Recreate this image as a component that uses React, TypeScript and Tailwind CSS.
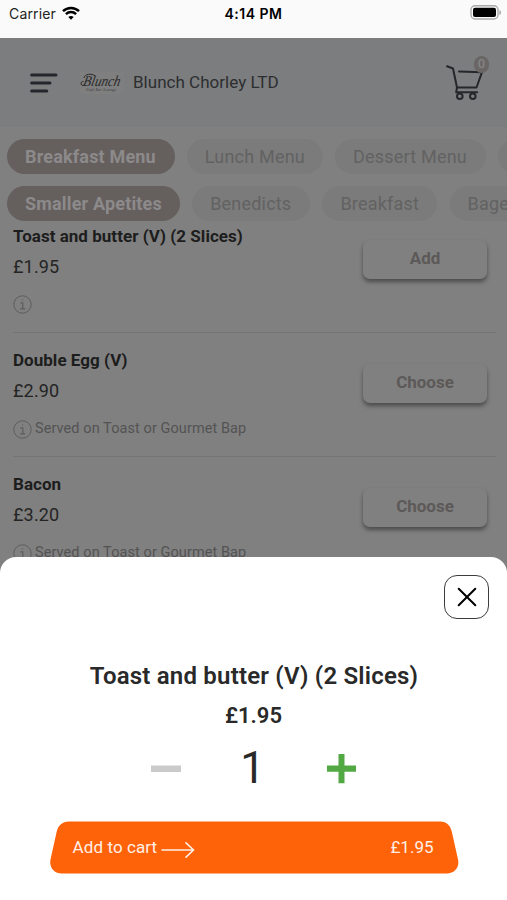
import clsx from 'clsx';
import React from 'react';

interface MenuItem {
  name: string;
  price: string;
  action: string;
  note?: string;
}

interface Tab {
  label: string;
  width: string;
  active?: boolean;
}

const menus: Tab[] = [
  { label: 'Breakfast Menu', width: 'w-[167.5px]', active: true },
  { label: 'Lunch Menu', width: 'w-[136px]' },
  { label: 'Dessert Menu', width: 'w-[151px]' },
  { label: 'Drinks', width: 'w-[110px]' },
];

const categories: Tab[] = [
  { label: 'Smaller Apetites', width: 'w-[173px]', active: true },
  { label: 'Benedicts', width: 'w-[118px]' },
  { label: 'Breakfast', width: 'w-[115px]' },
  { label: 'Bagels', width: 'w-[96px]' },
];

const items: MenuItem[] = [
  { name: 'Toast and butter (V) (2 Slices)', price: '£1.95', action: 'Add' },
  { name: 'Double Egg (V)', price: '£2.90', action: 'Choose', note: 'Served on Toast or Gourmet Bap' },
  { name: 'Bacon', price: '£3.20', action: 'Choose', note: 'Served on Toast or Gourmet Bap' },
];

const StatusBar = () => (
  <div className="grid h-[38px] shrink-0 grid-cols-3 items-start bg-[#fafafa] pt-[5px] text-black">
    <div className="flex items-center pl-[9px]">
      <span className="font-[Inter] text-[14px] leading-[18px] tracking-[0.15px] text-[#222]">Carrier</span>
      <svg className="-mt-[2px] ml-[6px]" width="18" height="14" viewBox="0 0 18 14" fill="none" stroke="currentColor" strokeWidth="2.5">
        <path d="M1 5.1C5.5.8 12.5.8 17 5.1" />
        <path d="M3.9 8.1c2.9-2.7 7.3-2.7 10.2 0" />
        <path d="M6.3 10.9c1.6-1.3 3.8-1.3 5.4 0L9 13.7z" fill="currentColor" stroke="none" />
      </svg>
    </div>
    <span className="text-center font-[Inter] text-[14px] leading-[18px] font-semibold tracking-[0.5px]">4:14 PM</span>
    <svg className="mr-[5px] justify-self-end" width="32" height="15" viewBox="0 0 32 15">
      <rect x="1" y=".8" width="27" height="13.2" rx="4" fill="#fafafa" stroke="#aaa" strokeWidth="1.4" />
      <rect x="3" y="2.8" width="23" height="9.2" rx="2" fill="#000" />
      <path d="M29.3 5v5c2.4-.8 2.4-4.2 0-5z" fill="#aaa" />
    </svg>
  </div>
);

const Header = () => (
  <header className="flex h-[89px] shrink-0 items-center bg-[#7b7d7f] pr-[18px] pl-[30px]">
    <svg width="28" height="22" viewBox="0 0 28 22" stroke="#25262b" strokeWidth="3.2" strokeLinecap="round">
      <path d="M1.7 3h24.2M1.7 11h18.2M1.7 19h15" />
    </svg>
    <div className="ml-[22px] flex h-[22px] w-[44px] items-center justify-center bg-[#7f7f80]">
      <svg width="44" height="22" viewBox="0 0 44 22" fill="#292929" fontFamily="Liberation Serif, serif" fontStyle="italic">
        <text x="4" y="13.5" fontSize="15" textLength="37" lengthAdjust="spacingAndGlyphs" transform="skewX(-12) translate(1.500 0)">Blunch</text>
        <path d="M5 13C0 15 0 9 3.500 9.500M4 6C4 2 12 1 15 4" fill="none" stroke="#292929" strokeWidth="1" />
        <text x="6" y="18.500" fontSize="4" textLength="30" fillOpacity=".8">Café Bar Lounge</text>
      </svg>
    </div>
    <h1 className="-mt-[2px] ml-[9px] text-[17px] leading-5 tracking-[0.02px] text-[#2d2e2f]">Blunch Chorley LTD</h1>
    <div className="relative ml-auto h-[44px] w-[44px]">
      <svg width="44" height="44" viewBox="0 0 44 44" fill="none" stroke="#26272a" strokeWidth="2" strokeLinecap="round" strokeLinejoin="round">
        <path d="M2 5.200l6 2.300 4 19h19.500l5.500-15.300L14 10.500" />
        <path d="M12 26.500l-.8 4.800h21" />
        <circle cx="14.800" cy="35.200" r="2.800" />
        <circle cx="27.800" cy="35.200" r="2.800" />
      </svg>
      <span className="absolute -top-[5px] left-[29px] flex h-[17px] w-[15px] items-center justify-center rounded-full bg-[#696665] text-[13px] font-medium text-[#858383]">
        0
      </span>
    </div>
  </header>
);

const TabRow = ({ tabs, className }: { tabs: Tab[]; className: string }) => (
  <div className={clsx('flex pl-[7px]', className)}>
    {tabs.map((tab) => (
      <button
        key={tab.label}
        className={clsx(
          'h-[35px] shrink-0 rounded-full pb-px pl-[18px] text-left text-[18px] whitespace-nowrap',
          tab.width,
          tab.active ? 'bg-[#655f5e] font-bold tracking-[0.17px] text-[#8c8a8a]' : 'bg-[#7b7b7b] tracking-[0.2px] text-[#626262]'
        )}
      >
        {tab.label}
      </button>
    ))}
  </div>
);

const InfoIcon = () => (
  <svg width="19" height="19" viewBox="0 0 19 19" fill="none" stroke="#5d5d5d" strokeWidth="1">
    <circle cx="9.5" cy="9.5" r="8.7" />
    <path d="M7.3 7.8h2.5v6M7 13.8h5.2M9.1 4.8h1" strokeWidth="1.2" />
  </svg>
);

const ItemRow = ({ item }: { item: MenuItem }) => (
  <li className="flex h-[124px] shrink-0 justify-between border-b border-[#757575]">
    <div className="flex flex-col">
      <h2 className="mt-[17px] text-[17px] leading-5 font-bold tracking-[0.03px] text-[#1d1d1d]">{item.name}</h2>
      <p className="mt-[11px] text-[18px] leading-5 tracking-[0.15px] text-[#242424]">{item.price}</p>
      <div className="mt-[18px] flex items-center gap-[3px]">
        <InfoIcon />
        <span className="text-[14.5px] leading-5 tracking-[0.08px] text-[#535353]">{item.note}</span>
      </div>
    </div>
    <button className="mt-[31px] mr-[9px] h-[39px] w-[124px] rounded-[7px] bg-[#808080] pb-[2px] text-[17px] font-bold text-[#5c5958] shadow-[0_3px_4px_#4c4c4c]">
      {item.action}
    </button>
  </li>
);

const CartSheet = () => (
  <section className="absolute inset-x-0 bottom-0 flex h-[343px] flex-col items-center rounded-t-[16px] bg-white text-[#292929]">
    <button className="mt-[18px] mr-[18px] flex h-[44px] w-[45px] shrink-0 items-center justify-center self-end rounded-[13px] border border-[#3c3c3c]">
      <svg width="20" height="20" viewBox="0 0 20 20" stroke="#000" strokeWidth="2" strokeLinecap="round">
        <path d="M1.7 1.7l16.6 16.6M18.3 1.7L1.7 18.3" />
      </svg>
    </button>
    <h2 className="mt-[41px] ml-px text-[24px] leading-8 font-semibold tracking-[0.2px] whitespace-nowrap">Toast and butter (V) (2 Slices)</h2>
    <p className="mt-[10px] text-[22px] leading-7 font-semibold">£1.95</p>
    <div className="mt-[13px] flex h-[52px] w-[206px] items-center justify-between">
      <svg width="30" height="30" viewBox="0 0 30 30" fill="#cacaca">
        <path d="M0 11.500h30v6.500H0z" />
      </svg>
      <span className="-mt-[2px] mr-[2px] text-[44px] leading-[52px]">1</span>
      <svg width="30" height="30" viewBox="0 0 30 30" fill="#52a944">
        <path d="M12.500 0h6v11.500H30.500v6.200h-12v11.600h-6V17.700H1V11.500h11.500z" />
      </svg>
    </div>
    <button className="relative mt-[26px] ml-[2px] h-[53px] w-[410px] text-[17px] text-[#fff0e6]">
      <svg className="absolute inset-0" width="410" height="53" viewBox="0 0 410 53" fill="#ff6309">
        <path d="M19 .5h371c7 0 10.5 4 12 11l6 27c1.8 8-3.5 14-11 14H12c-8 0-13-6-11.5-14l6-27C8 4.500 12 .5 19 .5z" />
      </svg>
      <span className="relative flex h-full items-center justify-between pr-[26px] pl-[23px]">
        <span className="flex items-center gap-[4px] tracking-[0.1px]">
          Add to cart
          <svg className="mt-[4px]" width="34" height="18" viewBox="0 0 34 18" fill="none" stroke="currentColor" strokeWidth="1.6" strokeLinecap="round">
            <path d="M1 9h31M25 1.800L32.500 9 25 16.200" />
          </svg>
        </span>
        <span>£1.95</span>
      </span>
    </button>
  </section>
);

export default function App() {
  return (
    <div className="relative flex h-[900px] w-[507px] flex-col overflow-hidden bg-[#808080] font-[Roboto,sans-serif]">
      <StatusBar />
      <Header />
      <main className="flex flex-col overflow-hidden pt-[12px]">
        <nav className="flex flex-col gap-[12px]">
          <TabRow tabs={menus} className="gap-[12.3px]" />
          <TabRow tabs={categories} className="gap-[12.2px]" />
        </nav>
        <ul className="-mt-[12px] mr-[11px] ml-[13px] flex flex-col">
          {items.map((item) => (
            <ItemRow key={item.name} item={item} />
          ))}
        </ul>
      </main>
      <CartSheet />
    </div>
  );
}
